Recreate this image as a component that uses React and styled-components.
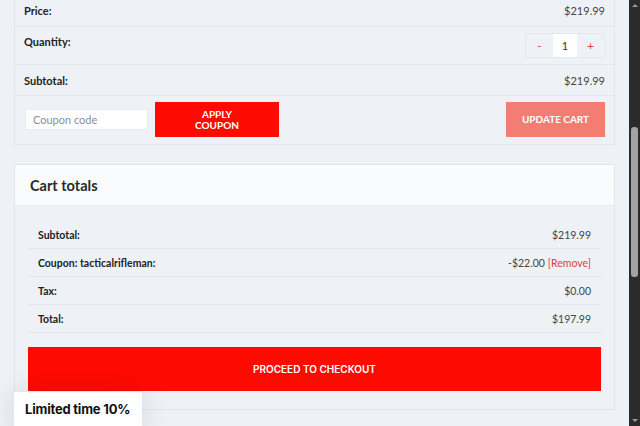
import React from "react";
import styled, { createGlobalStyle } from "styled-components";

const Global = createGlobalStyle`
  html, body { margin: 0; padding: 0; height: 100%; overflow: hidden; }
  body { background: #eef2f6; font-family: "Lato", "Open Sans", sans-serif; color: #333; }
  #root { height: 100%; }
`;

const Page = styled.div`
  display: flex;
  height: 426px;
  width: 640px;
  position: relative;
  overflow: hidden;
`;

const Content = styled.main`
  flex: 1;
  padding: 0 14px;
  display: flex;
  flex-direction: column;
  gap: 19px;
`;

const Box = styled.section`
  border: 1px solid #e0e6ec;
  border-top: ${(p) => (p.$cut ? "none" : "1px solid #e0e6ec")};
  background: #eef2f6;
`;

const Row = styled.div`
  display: flex;
  justify-content: space-between;
  align-items: ${(p) => (p.$top ? "flex-start" : "center")};
  padding: ${(p) => p.$pad || "9px 9px"};
  border-bottom: 1px solid #e0e6ec;
  font-size: 11px;
  line-height: 13px;
  height: ${(p) => p.$h || "auto"};
  box-sizing: border-box;
`;

const Label = styled.span`
  font-weight: 700;
  color: #222;
  padding-top: ${(p) => (p.$top ? "2px" : "0")};
`;

const Value = styled.span`
  color: #444;
`;

const Qty = styled.div`
  display: flex;
  border: 1px solid #e3e8ee;
  height: 25px;
  box-sizing: border-box;
  margin-right: -2px;
`;

const QtyBtn = styled.button`
  width: 27px;
  border: none;
  background: transparent;
  color: #e0443e;
  font-family: "Lato", sans-serif;
  font-size: 12px;
  padding: 0;
`;

const QtyInput = styled.div`
  width: 24px;
  background: #fff;
  display: flex;
  align-items: center;
  justify-content: center;
  font-size: 11px;
  color: #333;
`;

const CouponRow = styled.div`
  display: flex;
  align-items: center;
  padding: 6px 9px 7px 10px;
  gap: 7px;
`;

const CouponInput = styled.div`
  width: 123px;
  height: 21px;
  background: #fff;
  border: 1px solid #e8ecf0;
  box-sizing: border-box;
  display: flex;
  align-items: center;
  padding-left: 7px;
  font-size: 11px;
  color: #8a8f95;
`;

const Button = styled.button`
  height: 35px;
  border: none;
  background: ${(p) => (p.$muted ? "#f47d73" : "#fe0b00")};
  color: #fff;
  font-family: "Lato", sans-serif;
  font-weight: 700;
  font-size: 10px;
  line-height: 10.5px;
  text-transform: uppercase;
  width: ${(p) => p.$w};
  margin-left: ${(p) => (p.$push ? "auto" : "0")};
  padding: 0;
`;

const Header = styled.div`
  background: #fafbfc;
  height: 41px;
  box-sizing: border-box;
  display: flex;
  align-items: center;
  padding-left: 15px;
  border-bottom: 1px solid #e6eaee;
  font-size: 14.5px;
  font-weight: 700;
  color: #2a2a2a;
`;

const Body = styled.div`
  padding: 15px 13px 18px 13px;
`;

const TotalsRow = styled.div`
  display: flex;
  justify-content: space-between;
  align-items: center;
  height: 28px;
  box-sizing: border-box;
  padding: 0 10px;
  border-bottom: 1px solid #e0e6ec;
  font-size: 10.5px;
`;

const Remove = styled.span`
  color: #d9433d;
  margin-left: 3px;
`;

const Checkout = styled.button`
  display: block;
  width: 100%;
  height: 44px;
  margin-top: 14px;
  border: none;
  background: #fe0b00;
  color: #fff;
  font-family: "Inter", "Noto Sans", sans-serif;
  font-weight: 600;
  font-size: 10px;
`;

const Scrollbar = styled.div`
  width: 11px;
  background: #2b2b2b;
  display: flex;
  flex-direction: column;
  align-items: center;
  justify-content: space-between;
  position: relative;
`;

const Arrow = styled.div`
  width: 0;
  height: 0;
  border-left: 3px solid transparent;
  border-right: 3px solid transparent;
  ${(p) => (p.$down ? "border-top: 3px solid #9a9a9a;" : "border-bottom: 3px solid #9a9a9a;")}
  margin: 4px 0;
`;

const Thumb = styled.div`
  position: absolute;
  left: 2px;
  right: 2px;
  top: 127px;
  height: 150px;
  border-radius: 3px;
  background: #a3a3a3;
`;

const Popup = styled.div`
  position: absolute;
  left: 14px;
  top: 392px;
  width: 128px;
  height: 40px;
  background: #fff;
  box-shadow: 0 0 28px rgba(0, 0, 0, 0.12);
  display: flex;
  align-items: flex-start;
  padding: 9px 0 0 11px;
  box-sizing: border-box;
  font-family: "Inter", "Noto Sans", sans-serif;
  font-weight: 700;
  font-size: 13px;
  color: #111;
  letter-spacing: -0.2px;
`;

export default function App() {
  return (
    <>
      <Global />
      <Page>
        <Content>
          <Box $cut>
            <Row $pad="0 9px 6px 9px" $h="27px">
              <Label>Price:</Label>
              <Value>$219.99</Value>
            </Row>
            <Row $top $pad="6px 11px 5px 9px" $h="38px">
              <Label $top>Quantity:</Label>
              <Qty>
                <QtyBtn>-</QtyBtn>
                <QtyInput>1</QtyInput>
                <QtyBtn>+</QtyBtn>
              </Qty>
            </Row>
            <Row $pad="0 9px" $h="31px">
              <Label>Subtotal:</Label>
              <Value>$219.99</Value>
            </Row>
            <CouponRow>
              <CouponInput>Coupon code</CouponInput>
              <Button $w="124px">
                Apply
                <br />
                Coupon
              </Button>
              <Button $muted $push $w="99px">
                Update cart
              </Button>
            </CouponRow>
          </Box>
          <Box>
            <Header>Cart totals</Header>
            <Body>
              <TotalsRow>
                <Label>Subtotal:</Label>
                <Value>$219.99</Value>
              </TotalsRow>
              <TotalsRow>
                <Label>Coupon: tacticalrifleman:</Label>
                <Value>
                  -$22.00<Remove>[Remove]</Remove>
                </Value>
              </TotalsRow>
              <TotalsRow>
                <Label>Tax:</Label>
                <Value>$0.00</Value>
              </TotalsRow>
              <TotalsRow>
                <Label>Total:</Label>
                <Value>$197.99</Value>
              </TotalsRow>
              <Checkout>PROCEED TO CHECKOUT</Checkout>
            </Body>
          </Box>
        </Content>
        <Scrollbar>
          <Arrow />
          <Thumb />
          <Arrow $down />
        </Scrollbar>
        <Popup>Limited time 10%</Popup>
      </Page>
    </>
  );
}
